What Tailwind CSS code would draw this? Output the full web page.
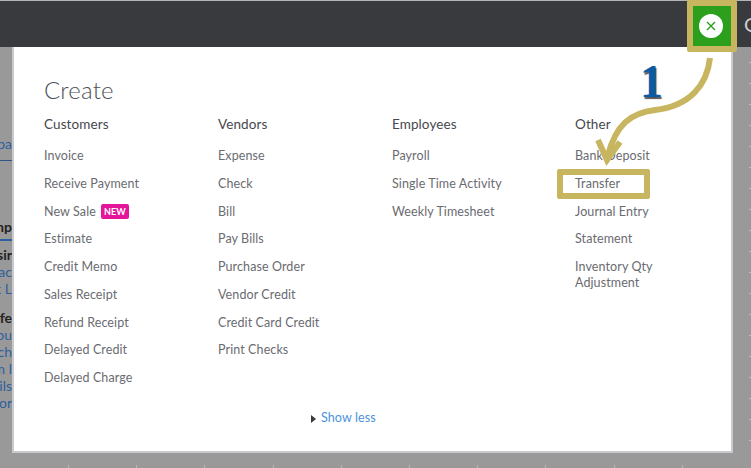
<!DOCTYPE html>
<html><head><meta charset="utf-8"><script src="https://cdn.jsdelivr.net/npm/@tailwindcss/browser@4"></script></head>
<body class="m-0">
<div class="relative w-[751px] h-[468px] overflow-hidden bg-[#999999] font-['Lato',sans-serif] text-[12.5px] tracking-[0.1px] text-[#6a6b71]">
  <header class="h-[47px] bg-[#393a3d] border-t border-[#b5b5b5] flex items-center justify-end overflow-hidden">
    <span class="text-[#d0d0d0] text-[20px] w-[7px] overflow-hidden leading-none">G</span>
  </header>
  <div class="flex h-[406px]">
    <aside class="w-[12px] shrink-0 overflow-hidden text-[#2f5f9e] text-[14px] tracking-normal flex flex-col items-end leading-[14px] whitespace-nowrap">
      <div class="h-[90px] shrink-0"></div>
      <div class="h-[24px] shrink-0 border-b border-[#2f5384] w-full flex justify-end">pa</div>
      <div class="h-[59px] shrink-0"></div>
      <div class="h-[21px] shrink-0 border-b-2 border-[#2f5f9e] w-full flex justify-end text-[#222] font-bold">mp</div>
      <div class="h-[7px] shrink-0"></div>
      <div class="text-[#222] font-bold h-[17px] shrink-0">sir</div>
      <div class="h-[17px] shrink-0">tac</div>
      <div class="h-[17px] shrink-0">k L</div>
      <div class="h-[12px] shrink-0"></div>
      <div class="text-[#222] font-bold h-[17px] shrink-0">fe</div>
      <div class="h-[17px] shrink-0">ou</div>
      <div class="h-[17px] shrink-0">ch</div>
      <div class="h-[17px] shrink-0">m l</div>
      <div class="h-[17px] shrink-0">ails</div>
      <div class="h-[17px] shrink-0">or</div>
    </aside>
    <main class="w-[721px] shrink-0 bg-white border-r-2 border-b-2 border-l-2 border-[#c9c9ce] flex flex-col">
      <h1 class="ml-[30px] mt-[29px] text-[24px] leading-[28px] font-light tracking-[0.2px] text-[#4d5057]">Create</h1>
      <div class="ml-[30px] mt-[8px] grid grid-cols-[174px_174px_183px_1fr]">
        <section>
          <h2 class="text-[13.5px] leading-[24px] text-[#45474d] mb-[6px]">Customers</h2>
          <ul class="leading-[27.75px]">
            <li>Invoice</li><li>Receive Payment</li>
            <li class="flex items-center gap-[5px]">New Sale <span class="bg-[#e5159b] text-white text-[9px] font-bold leading-[15px] h-[15px] px-[3px] rounded-[2px]">NEW</span></li>
            <li>Estimate</li><li>Credit Memo</li><li>Sales Receipt</li><li>Refund Receipt</li><li>Delayed Credit</li><li>Delayed Charge</li>
          </ul>
        </section>
        <section>
          <h2 class="text-[13.5px] leading-[24px] text-[#45474d] mb-[6px]">Vendors</h2>
          <ul class="leading-[27.75px]">
            <li>Expense</li><li>Check</li><li>Bill</li><li>Pay Bills</li><li>Purchase Order</li><li>Vendor Credit</li><li>Credit Card Credit</li><li>Print Checks</li>
          </ul>
        </section>
        <section>
          <h2 class="text-[13.5px] leading-[24px] text-[#45474d] mb-[6px]">Employees</h2>
          <ul class="leading-[27.75px]">
            <li>Payroll</li><li>Single Time Activity</li><li>Weekly Timesheet</li>
          </ul>
        </section>
        <section>
          <h2 class="text-[13.5px] leading-[24px] text-[#45474d] mb-[6px]">Other</h2>
          <ul class="leading-[27.75px]">
            <li>Bank Deposit</li><li>Transfer</li><li>Journal Entry</li><li>Statement</li>
            <li class="leading-[16px] pt-[6px]">Inventory Qty<br>Adjustment</li>
          </ul>
        </section>
      </div>
      <div class="mt-[17px] ml-[297px] flex items-center gap-[5px] text-[#4a94dc] h-[20px]">
        <svg width="5" height="8" viewBox="0 0 5 8"><path d="M0 0L5 4L0 8Z" fill="#393a3d"/></svg>
        <span>Show less</span>
      </div>
    </main>
    <aside class="flex-1 flex flex-col items-end pt-[15px] gap-[20px]">
      <i class="block w-[2px] h-[1px] bg-[#b8b8b8]"></i><i class="block w-[2px] h-[1px] bg-[#b8b8b8]"></i><i class="block w-[2px] h-[1px] bg-[#b8b8b8]"></i><i class="block w-[2px] h-[1px] bg-[#b8b8b8]"></i><i class="block w-[2px] h-[1px] bg-[#b8b8b8]"></i><i class="block w-[2px] h-[1px] bg-[#b8b8b8]"></i><i class="block w-[2px] h-[1px] bg-[#b8b8b8]"></i><i class="block w-[2px] h-[1px] bg-[#b8b8b8]"></i><i class="block w-[2px] h-[1px] bg-[#b8b8b8]"></i><i class="block w-[2px] h-[1px] bg-[#b8b8b8]"></i><i class="block w-[2px] h-[1px] bg-[#b8b8b8]"></i><i class="block w-[2px] h-[1px] bg-[#b8b8b8]"></i><i class="block w-[2px] h-[1px] bg-[#b8b8b8]"></i><i class="block w-[2px] h-[1px] bg-[#b8b8b8]"></i><i class="block w-[2px] h-[1px] bg-[#b8b8b8]"></i><i class="block w-[2px] h-[1px] bg-[#b8b8b8]"></i><i class="block w-[2px] h-[1px] bg-[#b8b8b8]"></i><i class="block w-[2px] h-[1px] bg-[#b8b8b8]"></i><i class="block w-[2px] h-[1px] bg-[#b8b8b8]"></i>
    </aside>
  </div>
  <footer class="mt-[12px] h-[3px] flex pl-[68px] gap-[67.2px]">
    <i class="block w-px h-[3px] bg-[#b8b8b8]"></i><i class="block w-px h-[3px] bg-[#b8b8b8]"></i><i class="block w-px h-[3px] bg-[#b8b8b8]"></i><i class="block w-px h-[3px] bg-[#b8b8b8]"></i><i class="block w-px h-[3px] bg-[#b8b8b8]"></i><i class="block w-px h-[3px] bg-[#b8b8b8]"></i><i class="block w-px h-[3px] bg-[#b8b8b8]"></i><i class="block w-px h-[3px] bg-[#b8b8b8]"></i><i class="block w-px h-[3px] bg-[#b8b8b8]"></i><i class="block w-px h-[3px] bg-[#b8b8b8]"></i>
  </footer>

  <!-- annotations on top -->
  <div class="absolute left-[687px] top-0 w-[50px] h-[52px] bg-[#2ca01c] border-[6px] border-[#c8b560] rounded-[2px] flex items-center justify-center pr-[2px]">
    <span class="w-[24px] h-[24px] rounded-full bg-white flex items-center justify-center">
      <svg width="10" height="10" viewBox="0 0 10 10"><path d="M1 1L9 9M9 1L1 9" stroke="#2ca01c" stroke-width="1.4"/></svg>
    </span>
  </div>
  <div class="absolute left-[557px] top-[169px] w-[93px] h-[30px] border-[6px] border-[#c8b560] rounded-[2px]"></div>
  <svg class="absolute left-[590px] top-[55px]" width="130" height="115" viewBox="590 55 130 115" fill="none">
    <path d="M710 58C707 85 690 106 655 110C630 113 616 125 608 155" stroke="#c8b560" stroke-width="6"/>
    <path d="M598 140L607 160L620 142" stroke="#c8b560" stroke-width="6" stroke-linejoin="miter"/>
  </svg>
  <span class="absolute left-[640px] top-[55px] text-[46px] leading-[54px] font-bold font-['Liberation_Serif',serif] text-[#0a5aa5] [text-shadow:1px_2px_1px_#555]">1</span>
</div>
</body></html>
